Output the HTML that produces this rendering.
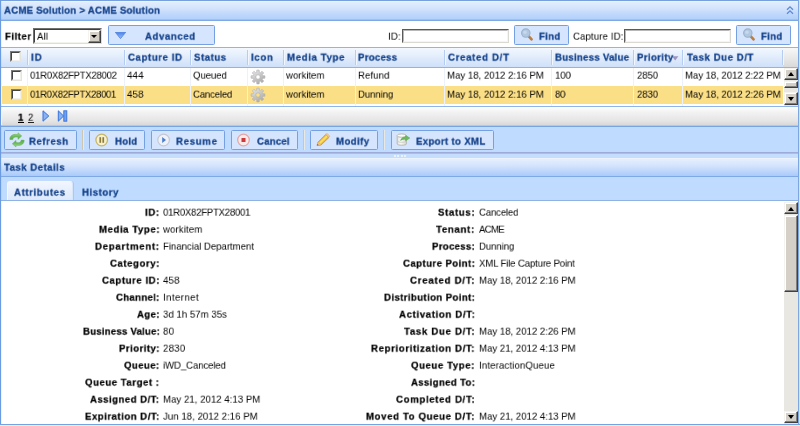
<!DOCTYPE html>
<html>
<head>
<meta charset="utf-8">
<title>ACME Solution</title>
<style>
html,body{margin:0;padding:0;}
body{width:800px;height:426px;overflow:hidden;background:#fff;position:relative;
  font-family:"Liberation Sans",sans-serif;font-size:9.6px;color:#000;}
.a{position:absolute;}
.t{position:absolute;white-space:nowrap;font-size:11px;line-height:14px;height:14px;transform:scale(0.875);transform-origin:0 0;will-change:transform;}
.b{font-weight:bold;-webkit-text-stroke:0.25px #000;}
.u{text-decoration:none;}
.hd{color:#15428b;font-weight:bold;-webkit-text-stroke:0.3px #15428b;}
/* frame */
#frameL{left:0;top:0;width:1px;height:426px;background:#6c9ce0;}
#frameL2{left:1px;top:1px;width:1px;height:424px;background:rgba(108,156,224,0.12);}
#frameB{left:0;top:424px;width:800px;height:1px;background:#76a2e2;}
#frameB2{left:0;top:425px;width:800px;height:1px;background:#e6eefb;}
#frameR{left:798px;top:0;width:1px;height:426px;background:#7ea6e0;}
#frameR2{left:799px;top:0;width:1px;height:426px;background:#d5e3f7;}
/* title bar */
#title{left:0;top:0;width:800px;height:21px;box-sizing:border-box;border-top:1px solid #76a0de;border-bottom:1px solid #7fa9e4;box-shadow:inset 0 -1px 0 #9fc0f0;
  background:linear-gradient(#f2f7fe 0,#e2edfd 6%,#d6e5fc 35%,#c2d9fb 65%,#b0cffa 100%);}
/* filter row */
#filter{left:2px;top:21px;width:796px;height:26px;background:#fff;}
.sel{left:33px;top:28px;width:69px;height:16px;box-sizing:border-box;background:#fff;border:1px solid;border-color:#6f6f6f #e0ddd5 #e0ddd5 #6f6f6f;}
.sel:after{content:"";position:absolute;left:0;top:0;right:0;bottom:0;border:1px solid;border-color:#3f3f3f #f4f2ec #f4f2ec #3f3f3f;}
.selbtn{left:88px;top:30px;width:13px;height:13px;box-sizing:border-box;background:#d4d0c8;border:1px solid;border-color:#f4f3ef #404040 #404040 #f4f3ef;box-shadow:inset -1px -1px 0 #808080,inset 1px 1px 0 #fff;}
.btn{position:absolute;box-sizing:border-box;border:1px solid #75a1e2;background:#d5e5fd;border-radius:1.5px;}
.inp{position:absolute;box-sizing:border-box;background:#fff;border:1px solid;border-color:#5a5a5a #dcd9d2 #dcd9d2 #5a5a5a;}
.inp:after{content:"";position:absolute;left:0;top:0;right:0;bottom:0;border:1px solid;border-color:#b8b8b8 #f6f5f1 #f6f5f1 #b8b8b8;}
/* grid */
#ghead{left:1px;top:47px;width:797px;height:21px;box-sizing:border-box;border-top:1px solid #8fb4e8;border-bottom:1px solid #8fb4e8;
  background:linear-gradient(#f4f8fe 0%,#e4eefc 40%,#cfe0f9 100%);}
.csep{position:absolute;top:50px;width:1px;height:15px;background:#b4cdf1;}
.csep2{position:absolute;top:50px;width:1px;height:15px;background:#f2f7fe;}
.rsep{position:absolute;top:68px;width:1px;height:38px;background:#ecf1fa;}
#row2{left:2px;top:86px;width:781px;height:18px;background:#fbdf87;}
.cb{position:absolute;width:11px;height:11px;box-sizing:border-box;background:#fff;border:1px solid;border-color:#7a7a7a #e6e3dc #e6e3dc #7a7a7a;}
.cb:after{content:"";position:absolute;left:0;top:0;right:0;bottom:0;border:1px solid;border-color:#444 #f2f0ea #f2f0ea #444;}
/* pager */
#gbot{left:1px;top:106px;width:798px;height:1px;background:#8fb4e8;}
#pager{left:2px;top:107px;width:796px;height:19px;background:linear-gradient(#ffffff 0%,#f3f3f3 25%,#e6e6e6 70%,#d6d6d6 100%);}
#pbot{left:1px;top:125px;width:798px;height:2px;background:linear-gradient(#b4c8e6 0,#b4c8e6 50%,#79a4e2 50%,#79a4e2 100%);}
/* toolbar */
#tb{left:1px;top:127px;width:798px;height:26px;background:#bfdbff;}
#tbbot{left:0;top:152px;width:800px;height:2px;background:linear-gradient(#97a3d3,#b4c4ea);}
#split{left:0;top:154px;width:800px;height:4px;background:#c6defd;}
.tsep{position:absolute;top:130px;width:1px;height:20px;background:#cdc6b0;}
.tsep2{position:absolute;top:130px;width:1px;height:20px;background:#e9e9e2;}
/* details */
#dhead{left:0;top:158px;width:800px;height:19px;box-sizing:border-box;border-bottom:1px solid #7fa9e4;
  background:linear-gradient(#f1f6fe 0,#e4eefd 8%,#d6e5fc 40%,#bfd8fb 70%,#aacafa 100%);}
#tabs{left:0;top:177px;width:800px;height:24px;background:#bfdbff;}
#tabline{left:0;top:200px;width:800px;height:1px;background:#8db2e3;}
#tabA{left:7px;top:181px;width:66px;height:19px;box-sizing:border-box;border:1px solid #f3f8fe;border-right-color:#d9e6fa;border-bottom:none;border-radius:3px 3px 0 0;
  background:linear-gradient(#f1f6fe 0%,#e6effc 50%,#dde9fb 100%);box-shadow:1px 0 0 #a9c8f3;}
#content{left:1px;top:201px;width:782px;height:225px;background:#fff;}
/* scrollbars */
.sbtrack{position:absolute;background:#e9e7e1;}
.sbb{position:absolute;box-sizing:border-box;background:#d4d0c8;border:1px solid;border-color:#f4f3ef #404040 #404040 #f4f3ef;box-shadow:inset -1px -1px 0 #808080,inset 1px 1px 0 #fff;}
.arr{position:absolute;width:0;height:0;border-left:3.5px solid transparent;border-right:3.5px solid transparent;}
.arr.up{border-bottom:4px solid #000;}
.arr.dn{border-top:4px solid #000;}
.arr.sm{border-left-width:3px;border-right-width:3px;border-top-width:3px;}
</style>
</head>
<body>
<!-- title -->
<div class="a" id="title"></div>
<svg class="a" style="left:785px;top:4px" width="12" height="12" viewBox="0 0 12 12"><path d="M2 5.8 L5 2.8 L8 5.8 M2 9.8 L5 6.8 L8 9.8" fill="none" stroke="#5a8ad8" stroke-width="1.3"/></svg>
<!-- filter row -->
<div class="a" id="filter"></div>
<div class="a sel"></div>
<div class="a selbtn"></div><div class="arr dn sm" style="left:91px;top:35px;"></div>
<div class="btn" style="left:108px;top:25px;width:107px;height:20px;"></div>
<svg class="a" style="left:115px;top:32px" width="11" height="7" viewBox="0 0 11 7"><defs><linearGradient id="tg" x1="0" y1="0" x2="0" y2="1"><stop offset="0" stop-color="#4a82ea"/><stop offset="1" stop-color="#9cc0f8"/></linearGradient></defs><path d="M0.3 0.3 H10.7 L5.5 6.6 Z" fill="url(#tg)" stroke="#4a80e0" stroke-width="0.8"/></svg>
<div class="inp" style="left:402px;top:29px;width:107px;height:14px;"></div>
<div class="btn" style="left:514px;top:25px;width:55px;height:20px;"></div>
<svg class="a" style="left:520px;top:27px" width="16" height="16" viewBox="0 0 16 16"><line x1="8.3" y1="8.8" x2="11.6" y2="12.4" stroke="#c07c3c" stroke-width="2.6" stroke-linecap="round"/><circle cx="5.8" cy="6.1" r="4.2" fill="#b2c8e0" stroke="#9ab2ce" stroke-width="1.1"/><circle cx="5" cy="5.2" r="1.8" fill="#c6d8ec"/></svg>
<div class="inp" style="left:624px;top:29px;width:107px;height:14px;"></div>
<div class="btn" style="left:736px;top:25px;width:55px;height:20px;"></div>
<svg class="a" style="left:742px;top:27px" width="16" height="16" viewBox="0 0 16 16"><line x1="8.3" y1="8.8" x2="11.6" y2="12.4" stroke="#c07c3c" stroke-width="2.6" stroke-linecap="round"/><circle cx="5.8" cy="6.1" r="4.2" fill="#b2c8e0" stroke="#9ab2ce" stroke-width="1.1"/><circle cx="5" cy="5.2" r="1.8" fill="#c6d8ec"/></svg>
<!-- grid -->
<div class="a" id="ghead"></div>
<div class="a" id="row2"></div>
<div class="a" style="left:783px;top:48px;width:15px;height:19px;background:linear-gradient(#f8f8f8,#e9e9e9 50%,#d9d9d9)"></div>
<div class="csep" style="left:27px"></div><div class="csep2" style="left:28px"></div><div class="rsep" style="left:27px"></div>
<div class="csep" style="left:124px"></div><div class="csep2" style="left:125px"></div><div class="rsep" style="left:124px"></div>
<div class="csep" style="left:190px"></div><div class="csep2" style="left:191px"></div><div class="rsep" style="left:190px"></div>
<div class="csep" style="left:247px"></div><div class="csep2" style="left:248px"></div><div class="rsep" style="left:247px"></div>
<div class="csep" style="left:283px"></div><div class="csep2" style="left:284px"></div><div class="rsep" style="left:283px"></div>
<div class="csep" style="left:355px"></div><div class="csep2" style="left:356px"></div><div class="rsep" style="left:355px"></div>
<div class="csep" style="left:444px"></div><div class="csep2" style="left:445px"></div><div class="rsep" style="left:444px"></div>
<div class="csep" style="left:551px"></div><div class="csep2" style="left:552px"></div><div class="rsep" style="left:551px"></div>
<div class="csep" style="left:633px"></div><div class="csep2" style="left:634px"></div><div class="rsep" style="left:633px"></div>
<div class="csep" style="left:682px"></div><div class="csep2" style="left:683px"></div><div class="rsep" style="left:682px"></div>
<div class="csep" style="left:782px"></div><div class="csep2" style="left:783px"></div>

<svg width="0" height="0" style="position:absolute"><defs><linearGradient id="gg" x1="0" y1="0" x2="0.6" y2="1"><stop offset="0" stop-color="#ececec"/><stop offset="1" stop-color="#acacac"/></linearGradient></defs></svg><svg class="a" style="left:249.7px;top:68.5px" width="16" height="16" viewBox="0 0 16 16"><path d="M14.90 6.82 L14.90 9.18 L12.84 9.24 L12.30 10.55 L13.72 12.04 L12.04 13.72 L10.55 12.30 L9.24 12.84 L9.18 14.90 L6.82 14.90 L6.76 12.84 L5.45 12.30 L3.96 13.72 L2.28 12.04 L3.70 10.55 L3.16 9.24 L1.10 9.18 L1.10 6.82 L3.16 6.76 L3.70 5.45 L2.28 3.96 L3.96 2.28 L5.45 3.70 L6.76 3.16 L6.82 1.10 L9.18 1.10 L9.24 3.16 L10.55 3.70 L12.04 2.28 L13.72 3.96 L12.30 5.45 L12.84 6.76 Z M10.2 8 A2.2 2.2 0 1 0 5.8 8 A2.2 2.2 0 1 0 10.2 8 Z" fill="url(#gg)" fill-rule="evenodd" stroke="#adadad" stroke-width="0.6"/></svg><svg class="a" style="left:249.7px;top:87.3px" width="16" height="16" viewBox="0 0 16 16"><path d="M14.90 6.82 L14.90 9.18 L12.84 9.24 L12.30 10.55 L13.72 12.04 L12.04 13.72 L10.55 12.30 L9.24 12.84 L9.18 14.90 L6.82 14.90 L6.76 12.84 L5.45 12.30 L3.96 13.72 L2.28 12.04 L3.70 10.55 L3.16 9.24 L1.10 9.18 L1.10 6.82 L3.16 6.76 L3.70 5.45 L2.28 3.96 L3.96 2.28 L5.45 3.70 L6.76 3.16 L6.82 1.10 L9.18 1.10 L9.24 3.16 L10.55 3.70 L12.04 2.28 L13.72 3.96 L12.30 5.45 L12.84 6.76 Z M10.2 8 A2.2 2.2 0 1 0 5.8 8 A2.2 2.2 0 1 0 10.2 8 Z" fill="url(#gg)" fill-rule="evenodd" stroke="#adadad" stroke-width="0.6"/></svg>
<div class="cb" style="left:10px;top:51px"></div>
<div class="cb" style="left:11px;top:70px"></div>
<div class="cb" style="left:11px;top:89px"></div>
<svg class="a" style="left:672px;top:56px" width="7" height="5" viewBox="0 0 7 5"><path d="M0 0.3 H6.4 L3.2 4.6 Z" fill="#9f93c0"/></svg>
<!-- pager -->
<div class="a" id="gbot"></div>
<div class="a" id="pager"></div>
<div class="a" id="pbot"></div>
<svg class="a" style="left:42px;top:110px" width="28" height="12" viewBox="0 0 28 12"><defs><linearGradient id="pa" x1="0" y1="0" x2="1" y2="0"><stop offset="0" stop-color="#2f6fe0"/><stop offset="0.5" stop-color="#8fb8f4"/><stop offset="1" stop-color="#3a78e4"/></linearGradient></defs>
<path d="M1 0.8 L6.8 6 L1 11.2 Z" fill="#8ab2f2" stroke="#3572dc" stroke-width="1"/>
<path d="M16.3 0.8 L21.6 6 L16.3 11.2 Z" fill="#8ab2f2" stroke="#3572dc" stroke-width="1"/>
<rect x="21.8" y="0.8" width="3" height="10.4" fill="#6fa0ee" stroke="#3572dc" stroke-width="0.9"/></svg>
<div class="a" style="left:18px;top:122px;width:6px;height:1px;background:#000"></div><div class="a" style="left:28px;top:122px;width:6px;height:1px;background:#222"></div>
<!-- toolbar -->
<div class="a" id="tb"></div>
<div class="a" id="tbbot"></div>
<div class="a" id="split"></div>
<div class="btn tbb" style="left:4px;top:130px;width:73px;height:20px"></div>
<div class="btn tbb" style="left:89px;top:130px;width:56px;height:20px"></div>
<div class="btn tbb" style="left:151px;top:130px;width:74px;height:20px"></div>
<div class="btn tbb" style="left:231px;top:130px;width:67px;height:20px"></div>
<div class="btn tbb" style="left:310px;top:130px;width:68px;height:20px"></div>
<div class="btn tbb" style="left:391px;top:130px;width:103px;height:20px"></div>
<div class="tsep" style="left:82px"></div><div class="tsep2" style="left:83px"></div>
<div class="tsep" style="left:303px"></div><div class="tsep2" style="left:304px"></div>
<div class="tsep" style="left:383px"></div><div class="tsep2" style="left:384px"></div>

<div class="a" style="left:394px;top:154.5px;width:2px;height:2px;background:#eaf2fd"></div><div class="a" style="left:397px;top:154.5px;width:2px;height:2px;background:#eaf2fd"></div><div class="a" style="left:401px;top:154.5px;width:2px;height:2px;background:#eaf2fd"></div><div class="a" style="left:404px;top:154.5px;width:2px;height:2px;background:#eaf2fd"></div>
<svg class="a" style="left:8.5px;top:132.4px" width="16" height="16" viewBox="0 0 16 16"><defs><linearGradient id="rg" x1="0" y1="0" x2="0" y2="1"><stop offset="0" stop-color="#a6dc90"/><stop offset="0.5" stop-color="#6fbf5e"/><stop offset="1" stop-color="#58a94b"/></linearGradient></defs>
<path id="ra" d="M0.8 7.4 C0.8 4.4 3 2.3 6.2 2.3 L9 2.4 L9 0.7 L12.7 3.9 L9 7.3 L9 5.1 L6.8 5 C5 5 4 6 3.7 7.6 Z" fill="url(#rg)" stroke="#63ad52" stroke-width="0.5"/>
<path d="M0.8 7.4 C0.8 4.4 3 2.3 6.2 2.3 L9 2.4 L9 0.7 L12.7 3.9 L9 7.3 L9 5.1 L6.8 5 C5 5 4 6 3.7 7.6 Z" fill="url(#rg)" stroke="#63ad52" stroke-width="0.5" transform="rotate(180 8 7.85)"/></svg>
<svg class="a" style="left:94px;top:132px" width="16" height="16" viewBox="0 0 16 16"><circle cx="7.7" cy="8" r="5.8" fill="#f6f0d2" stroke="#c6b666" stroke-width="1.3"/><rect x="5.4" y="5.2" width="1.7" height="5.6" fill="#8e7c34"/><rect x="8.4" y="5.2" width="1.7" height="5.6" fill="#8e7c34"/></svg>
<svg class="a" style="left:156px;top:132px" width="16" height="16" viewBox="0 0 16 16"><circle cx="7.6" cy="8" r="5.8" fill="#eef2f8" stroke="#c4c8d2" stroke-width="1.2"/><path d="M6.2 5 L10 8 L6.2 11 Z" fill="#4c7cd0"/></svg>
<svg class="a" style="left:236px;top:132px" width="16" height="16" viewBox="0 0 16 16"><circle cx="7.5" cy="8" r="5.8" fill="#fbeaea" stroke="#e6a6a6" stroke-width="1.3"/><rect x="5.5" y="6" width="4" height="4" fill="#cc3a3a"/></svg>
<svg class="a" style="left:315px;top:132px" width="16" height="16" viewBox="0 0 16 16"><path d="M2 13.6 L3 10.2 L10.8 2.4 L14 5.4 L6 13 Z" fill="#eeb844" stroke="#d09a34" stroke-width="0.9"/><path d="M4.8 11.2 L12 4.2" stroke="#f8e464" stroke-width="1.7" fill="none"/><path d="M2 13.6 L3 10.2 L5.8 12.8 Z" fill="#eec49a"/><path d="M2 13.6 L2.5 12 L3.7 13.1 Z" fill="#6a4a2a"/><path d="M10.8 2.4 L12 1.5 L14.9 4.2 L14 5.4 Z" fill="#f4d0b4" stroke="#d8a050" stroke-width="0.6"/></svg>
<svg class="a" style="left:394.8px;top:131.7px" width="18" height="16" viewBox="0 0 18 16"><defs><linearGradient id="cy" x1="0" y1="0" x2="1" y2="0"><stop offset="0" stop-color="#e2e2de"/><stop offset="0.4" stop-color="#f8f8f6"/><stop offset="1" stop-color="#d6d6d0"/></linearGradient></defs><path d="M2.2 3.6 V12 C2.2 13.6 11.4 13.6 11.4 12 V3.6" fill="url(#cy)" stroke="#b4b4ac" stroke-width="0.9"/><path d="M3 9.6 C5 10.6 9 10.6 10.8 9.6" fill="none" stroke="#c4c4bc" stroke-width="0.7"/><ellipse cx="6.8" cy="3.6" rx="4.6" ry="1.7" fill="#fafaf8" stroke="#b4b4ac" stroke-width="0.9"/><path d="M5.6 8.4 C6 6 8.6 4.9 10.6 5 V3.4 L14.8 6 L10.6 8.8 V7.2 C8.8 7 7 7.4 5.6 8.4 Z" fill="#6cbc5c" stroke="#52a048" stroke-width="0.5"/></svg>
<!-- details -->
<div class="a" id="dhead"></div>
<div class="a" id="tabs"></div>
<div class="a" id="tabA"></div>
<div class="a" id="tabline"></div>
<div class="a" id="content"></div>
<div class="t hd" style="left:4.2px;top:4.2px;letter-spacing:0.26px">ACME Solution &gt; ACME Solution</div>
<div class="t b" style="left:4.7px;top:29.9px;letter-spacing:0.58px">Filter</div>
<div class="t " style="left:37.2px;top:29.9px;letter-spacing:0.15px">All</div>
<div class="t hd" style="left:144.7px;top:29.9px;letter-spacing:0.66px">Advanced</div>
<div class="t " style="left:387.7px;top:29.9px;letter-spacing:0.30px">ID:</div>
<div class="t hd" style="left:539.2px;top:29.9px;letter-spacing:0.37px">Find</div>
<div class="t " style="left:572.7px;top:29.9px;letter-spacing:0.14px">Capture ID:</div>
<div class="t hd" style="left:761.2px;top:29.9px;letter-spacing:0.37px">Find</div>
<div class="t hd" style="left:30.7px;top:50.6px;letter-spacing:1.13px">ID</div>
<div class="t hd" style="left:127.7px;top:50.6px;letter-spacing:0.68px">Capture ID</div>
<div class="t hd" style="left:193.7px;top:50.6px;letter-spacing:0.61px">Status</div>
<div class="t hd" style="left:250.7px;top:50.6px;letter-spacing:0.80px">Icon</div>
<div class="t hd" style="left:287.2px;top:50.6px;letter-spacing:0.73px">Media Type</div>
<div class="t hd" style="left:358.4px;top:50.6px;letter-spacing:0.31px">Process</div>
<div class="t hd" style="left:447.7px;top:50.6px;letter-spacing:0.79px">Created D/T</div>
<div class="t hd" style="left:554.7px;top:50.6px;letter-spacing:0.30px">Business Value</div>
<div class="t hd" style="left:637.2px;top:50.6px;letter-spacing:0.41px">Priority</div>
<div class="t hd" style="left:686.5px;top:50.6px;letter-spacing:0.63px">Task Due D/T</div>
<div class="t " style="left:29.7px;top:69.2px;letter-spacing:-0.35px">01R0X82FPTX28002</div>
<div class="t " style="left:126.7px;top:69.2px;letter-spacing:0.20px">444</div>
<div class="t " style="left:193.2px;top:69.2px;letter-spacing:-0.13px">Queued</div>
<div class="t " style="left:286.4px;top:69.2px;letter-spacing:-0.02px">workitem</div>
<div class="t " style="left:357.7px;top:69.2px;letter-spacing:0.06px">Refund</div>
<div class="t " style="left:447.2px;top:69.2px;letter-spacing:-0.00px">May 18, 2012 2:16 PM</div>
<div class="t " style="left:554.7px;top:69.2px;letter-spacing:-0.18px">100</div>
<div class="t " style="left:636.7px;top:69.2px;letter-spacing:-0.09px">2850</div>
<div class="t " style="left:685.2px;top:69.2px;letter-spacing:-0.07px">May 18, 2012 2:22 PM</div>
<div class="t " style="left:29.7px;top:88.2px;letter-spacing:-0.39px">01R0X82FPTX28001</div>
<div class="t " style="left:126.7px;top:88.2px;letter-spacing:0.20px">458</div>
<div class="t " style="left:193.2px;top:88.2px;letter-spacing:-0.22px">Canceled</div>
<div class="t " style="left:286.4px;top:88.2px;letter-spacing:-0.02px">workitem</div>
<div class="t " style="left:357.7px;top:88.2px;letter-spacing:-0.12px">Dunning</div>
<div class="t " style="left:447.2px;top:88.2px;letter-spacing:-0.00px">May 18, 2012 2:16 PM</div>
<div class="t " style="left:554.7px;top:88.2px;letter-spacing:-0.35px">80</div>
<div class="t " style="left:636.7px;top:88.2px;letter-spacing:-0.09px">2830</div>
<div class="t " style="left:685.2px;top:88.2px;letter-spacing:-0.07px">May 18, 2012 2:26 PM</div>
<div class="t b u" style="left:18.2px;top:111.2px;letter-spacing:0.85px">1</div>
<div class="t u" style="left:28.2px;top:111.2px;letter-spacing:0.85px">2</div>
<div class="t hd" style="left:28.7px;top:135.2px;letter-spacing:0.61px">Refresh</div>
<div class="t hd" style="left:114.5px;top:135.2px;letter-spacing:0.27px">Hold</div>
<div class="t hd" style="left:175.7px;top:135.2px;letter-spacing:0.79px">Resume</div>
<div class="t hd" style="left:256.7px;top:135.2px;letter-spacing:0.20px">Cancel</div>
<div class="t hd" style="left:335.7px;top:135.2px;letter-spacing:0.49px">Modify</div>
<div class="t hd" style="left:415.7px;top:135.2px;letter-spacing:0.38px">Export to XML</div>
<div class="t hd" style="left:4.2px;top:161.2px;letter-spacing:0.54px">Task Details</div>
<div class="t hd" style="left:13.7px;top:185.7px;letter-spacing:0.70px">Attributes</div>
<div class="t hd" style="left:82.2px;top:185.7px;letter-spacing:0.60px">History</div>
<div class="t b" style="left:144.7px;top:205.7px;letter-spacing:0.79px">ID:</div>
<div class="t " style="left:163.2px;top:205.7px;letter-spacing:-0.31px">01R0X82FPTX28001</div>
<div class="t b" style="left:98.5px;top:222.7px;letter-spacing:0.64px">Media Type:</div>
<div class="t " style="left:163.2px;top:222.7px;letter-spacing:0.13px">workitem</div>
<div class="t b" style="left:94.7px;top:239.7px;letter-spacing:0.85px">Department:</div>
<div class="t " style="left:163.2px;top:239.7px;letter-spacing:-0.03px">Financial Department</div>
<div class="t b" style="left:109.7px;top:256.7px;letter-spacing:0.63px">Category:</div>
<div class="t b" style="left:101.7px;top:273.7px;letter-spacing:0.63px">Capture ID:</div>
<div class="t " style="left:163.2px;top:273.7px;letter-spacing:0.20px">458</div>
<div class="t b" style="left:116.0px;top:290.7px;letter-spacing:0.35px">Channel:</div>
<div class="t " style="left:163.2px;top:290.7px;letter-spacing:0.49px">Internet</div>
<div class="t b" style="left:136.7px;top:307.7px;letter-spacing:0.43px">Age:</div>
<div class="t " style="left:163.2px;top:307.7px;letter-spacing:0.02px">3d 1h 57m 35s</div>
<div class="t b" style="left:82.5px;top:324.7px;letter-spacing:0.25px">Business Value:</div>
<div class="t " style="left:163.2px;top:324.7px;letter-spacing:0.33px">80</div>
<div class="t b" style="left:118.7px;top:341.7px;letter-spacing:0.51px">Priority:</div>
<div class="t " style="left:163.2px;top:341.7px;letter-spacing:0.28px">2830</div>
<div class="t b" style="left:124.0px;top:358.7px;letter-spacing:0.46px">Queue:</div>
<div class="t " style="left:163.2px;top:358.7px;letter-spacing:-0.13px">iWD_Canceled</div>
<div class="t b" style="left:85.2px;top:375.7px;letter-spacing:0.59px">Queue Target :</div>
<div class="t b" style="left:90.0px;top:392.7px;letter-spacing:0.52px">Assigned D/T:</div>
<div class="t " style="left:163.2px;top:392.7px;letter-spacing:0.03px">May 21, 2012 4:13 PM</div>
<div class="t b" style="left:84.7px;top:409.7px;letter-spacing:0.57px">Expiration D/T:</div>
<div class="t " style="left:163.2px;top:409.7px;letter-spacing:0.03px">Jun 18, 2012 2:16 PM</div>
<div class="t b" style="left:437.7px;top:205.7px;letter-spacing:0.76px">Status:</div>
<div class="t " style="left:478.7px;top:205.7px;letter-spacing:-0.20px">Canceled</div>
<div class="t b" style="left:436.2px;top:222.7px;letter-spacing:0.78px">Tenant:</div>
<div class="t " style="left:478.7px;top:222.7px;letter-spacing:-0.80px">ACME</div>
<div class="t b" style="left:431.9px;top:239.7px;letter-spacing:0.35px">Process:</div>
<div class="t " style="left:478.7px;top:239.7px;letter-spacing:-0.12px">Dunning</div>
<div class="t b" style="left:402.7px;top:256.7px;letter-spacing:0.49px">Capture Point:</div>
<div class="t " style="left:478.7px;top:256.7px;letter-spacing:-0.18px">XML File Capture Point</div>
<div class="t b" style="left:409.7px;top:273.7px;letter-spacing:0.87px">Created D/T:</div>
<div class="t " style="left:478.7px;top:273.7px;letter-spacing:-0.01px">May 18, 2012 2:16 PM</div>
<div class="t b" style="left:383.7px;top:290.7px;letter-spacing:0.44px">Distribution Point:</div>
<div class="t b" style="left:398.5px;top:307.7px;letter-spacing:0.73px">Activation D/T:</div>
<div class="t b" style="left:403.7px;top:324.7px;letter-spacing:0.78px">Task Due D/T:</div>
<div class="t " style="left:478.7px;top:324.7px;letter-spacing:-0.01px">May 18, 2012 2:26 PM</div>
<div class="t b" style="left:370.9px;top:341.7px;letter-spacing:0.72px">Reprioritization D/T:</div>
<div class="t " style="left:478.7px;top:341.7px;letter-spacing:-0.01px">May 21, 2012 4:13 PM</div>
<div class="t b" style="left:411.2px;top:358.7px;letter-spacing:0.65px">Queue Type:</div>
<div class="t " style="left:478.7px;top:358.7px;letter-spacing:0.15px">InteractionQueue</div>
<div class="t b" style="left:410.7px;top:375.7px;letter-spacing:0.39px">Assigned To:</div>
<div class="t b" style="left:395.7px;top:392.7px;letter-spacing:0.75px">Completed D/T:</div>
<div class="t b" style="left:366.1px;top:409.7px;letter-spacing:0.71px">Moved To Queue D/T:</div>
<div class="t " style="left:478.7px;top:409.7px;letter-spacing:-0.01px">May 21, 2012 4:13 PM</div>
<div class="sbtrack" style="left:784px;top:68px;width:14px;height:38px"></div>
<div class="sbb" style="left:784px;top:68px;width:14px;height:12px"></div><div class="arr up" style="left:787.5px;top:72px"></div>
<div class="sbb" style="left:784px;top:81px;width:14px;height:7px"></div>
<div class="sbb" style="left:784px;top:92px;width:14px;height:13px"></div><div class="arr dn" style="left:787.5px;top:97px"></div>
<div class="sbtrack" style="left:784px;top:202px;width:14px;height:224px"></div>
<div class="sbb" style="left:784px;top:202px;width:14px;height:12px"></div><div class="arr up" style="left:787.5px;top:207px"></div>
<div class="sbb" style="left:784px;top:215px;width:14px;height:77px"></div>
<div class="sbb" style="left:784px;top:411px;width:14px;height:12px"></div><div class="arr dn" style="left:787.5px;top:415px"></div>
<div class="a" id="frameL"></div><div class="a" id="frameL2"></div>
<div class="a" id="frameR"></div><div class="a" id="frameR2"></div>
<div class="a" id="frameB"></div><div class="a" id="frameB2"></div>
</body>
</html>
